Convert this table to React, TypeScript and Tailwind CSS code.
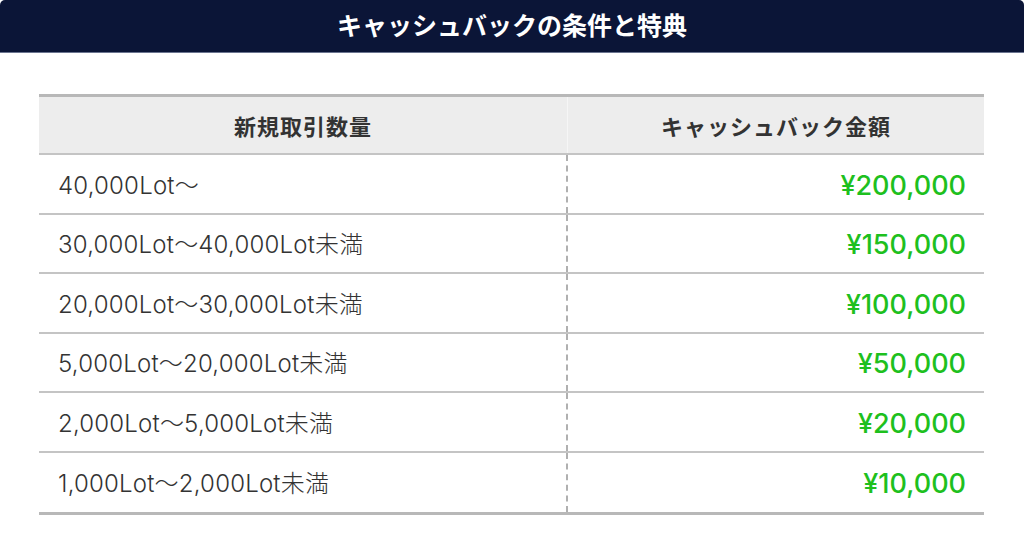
import React from 'react';

const rows = [
  { range: '40,000Lot〜', amount: '¥200,000' },
  { range: '30,000Lot〜40,000Lot未満', amount: '¥150,000' },
  { range: '20,000Lot〜30,000Lot未満', amount: '¥100,000' },
  { range: '5,000Lot〜20,000Lot未満', amount: '¥50,000' },
  { range: '2,000Lot〜5,000Lot未満', amount: '¥20,000' },
  { range: '1,000Lot〜2,000Lot未満', amount: '¥10,000' },
];

export default function App() {
  return (
    <div
      className="w-[1024px] h-[544px] bg-white"
      style={{ fontFamily: '"Noto Sans CJK JP", "Noto Sans", sans-serif' }}
    >
      {/* Title bar */}
      <div className="h-[53px] bg-[#0b1537] rounded-t-[5px] border-b border-[#6b7590] flex items-center justify-center pb-[3px]">
        <h1 className="text-white text-[25px] font-bold leading-none">
          キャッシュバックの条件と特典
        </h1>
      </div>

      {/* Table */}
      <div className="mx-[39px] mt-[41px] border-t-[3px] border-b-[3px] border-[#b8b8b8] w-[945px]">
        <div className="flex h-[58px] bg-[#ededed] border-b-2 border-[#c4c4c4] text-[#333] text-[22px] font-bold">
          <div className="w-[529px] flex items-center justify-center border-r border-[#f6f6f6] tracking-[1px]">新規取引数量</div>
          <div className="flex-1 flex items-center justify-center tracking-[1px]">キャッシュバック金額</div>
        </div>
        {rows.map((row, i) => (
          <div
            key={row.amount}
            className={`flex h-[59.5px] ${i < rows.length - 1 ? 'border-b-2 border-[#c4c4c4]' : ''}`}
          >
            <div
              className="w-[529px] flex items-center pl-[19px] pt-[4px] text-[24px] font-light tracking-[0.2px] text-[#333] border-r-2 border-dashed border-[#b0b0b0]"
              style={{ fontFamily: 'Inter, "Noto Sans CJK JP", sans-serif' }}
            >
              {row.range}
            </div>
            <div
              className="flex-1 flex items-center justify-end pr-[18px] pt-[4px] text-[27px] font-medium text-[#1ec01e]"
              style={{ fontFamily: 'Inter, "Noto Sans CJK JP", sans-serif' }}
            >
              {row.amount}
            </div>
          </div>
        ))}
      </div>
    </div>
  );
}
